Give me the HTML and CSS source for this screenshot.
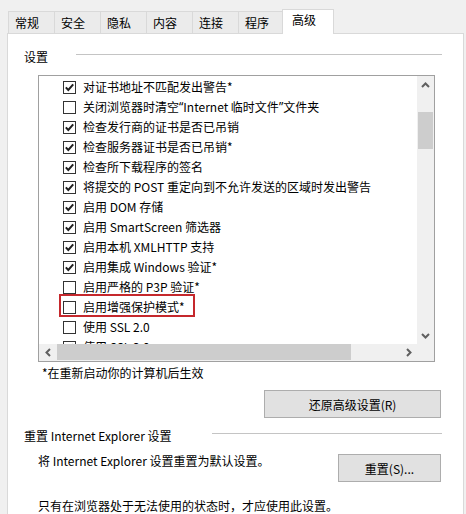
FILE: index.html
```html
<!DOCTYPE html>
<html lang="zh-CN">
  <head>
    <meta charset="UTF-8" />
    <title>Internet 选项 - 高级</title>
    <link rel="stylesheet" href="styles.css">
  </head>
  <body>
    <div class="tabs">
      <div class="tab">常规</div>
      <div class="tab">安全</div>
      <div class="tab">隐私</div>
      <div class="tab">内容</div>
      <div class="tab">连接</div>
      <div class="tab">程序</div>
      <div class="tab active">高级</div>
    </div>

    <div class="panel">
      <div class="group-title">
        <span>设置</span>
        <span class="rule rule-long"></span>
      </div>

      <div class="listbox">
        <div class="items">
          <div class="item"><span class="check on"></span>对证书地址不匹配发出警告*</div>
          <div class="item"><span class="check"></span>关闭浏览器时清空<span class="q">“</span>Internet 临时文件<span class="q">”</span>文件夹</div>
          <div class="item"><span class="check on"></span>检查发行商的证书是否已吊销</div>
          <div class="item"><span class="check on"></span>检查服务器证书是否已吊销*</div>
          <div class="item"><span class="check on"></span>检查所下载程序的签名</div>
          <div class="item"><span class="check on"></span>将提交的 POST 重定向到不允许发送的区域时发出警告</div>
          <div class="item"><span class="check on"></span>启用 DOM 存储</div>
          <div class="item"><span class="check on"></span>启用 SmartScreen 筛选器</div>
          <div class="item"><span class="check on"></span>启用本机 XMLHTTP 支持</div>
          <div class="item"><span class="check on"></span>启用集成 Windows 验证*</div>
          <div class="item"><span class="check"></span>启用严格的 P3P 验证*</div>
          <div class="item marked"><span class="check"></span>启用增强保护模式*</div>
          <div class="item"><span class="check"></span>使用 SSL 2.0</div>
          <div class="item"><span class="check on"></span>使用 SSL 3.0</div>
        </div>

        <div class="vscroll">
          <div class="arrow">
            <svg width="9" height="6" viewBox="0 0 9 6"><path d="M1 5 L4.5 1.5 L8 5" fill="none" stroke="#606060" stroke-width="2"/></svg>
          </div>
          <div class="vtrack"><div class="vthumb"></div></div>
          <div class="arrow">
            <svg width="9" height="6" viewBox="0 0 9 6"><path d="M1 1 L4.5 4.5 L8 1" fill="none" stroke="#606060" stroke-width="2"/></svg>
          </div>
        </div>

        <div class="hscroll">
          <div class="arrow">
            <svg width="6" height="9" viewBox="0 0 6 9"><path d="M5 1 L1.5 4.5 L5 8" fill="none" stroke="#606060" stroke-width="2"/></svg>
          </div>
          <div class="htrack"><div class="hthumb"></div></div>
          <div class="arrow">
            <svg width="6" height="9" viewBox="0 0 6 9"><path d="M1 1 L4.5 4.5 L1 8" fill="none" stroke="#606060" stroke-width="2"/></svg>
          </div>
        </div>

        <div class="corner"></div>
      </div>

      <p class="note">*在重新启动你的计算机后生效</p>

      <div class="btn-row">
        <button class="btn btn-wide">还原高级设置(R)</button>
      </div>

      <div class="group-title second">
        <span>重置 Internet Explorer 设置</span>
        <span class="rule rule-short"></span>
      </div>

      <div class="reset-row">
        <p class="desc">将 Internet Explorer 设置重置为默认设置。</p>
        <button class="btn btn-reset">重置(S)...</button>
      </div>

      <p class="desc last">只有在浏览器处于无法使用的状态时，才应使用此设置。</p>
    </div>
  </body>
</html>
```

FILE: styles.css
```css
/* Reset */
body,
p {
  margin: 0;
  padding: 0;
}

body {
  font-family: "Noto Sans CJK SC", "Noto Sans", sans-serif;
  font-size: 12px;
  line-height: 16px;
  color: #000;
  background-color: #f0f0f0;
  height: 514px;
  overflow: hidden;
}

/* Tab strip */
.tabs {
  display: flex;
  align-items: flex-end;
  padding: 9px 0 0 8px;
  height: 24px;
}

.tab {
  width: 47px;
  height: 22px;
  padding-left: 6px;
  box-sizing: border-box;
  line-height: 22px;
  background-color: #ebebeb;
  border: 1px solid #d9d9d9;
  border-bottom: none;
  margin-right: -1px;
}

.tab.active {
  position: relative;
  z-index: 1;
  width: 52px;
  height: 25px;
  margin: 0 0 -1px -2px;
  padding: 0 0 0 9px;
  line-height: 20px;
  background-color: #fff;
}

/* Main panel */
.panel {
  margin-left: 7px;
  width: 457px;
  height: 490px;
  box-sizing: border-box;
  background-color: #fff;
  border: 1px solid #d9d9d9;
  padding: 15px 21px 0 16px;
}

.group-title {
  display: flex;
  align-items: center;
  justify-content: space-between;
}

.rule {
  height: 1px;
  margin-top: -5px;
  background-color: #c4c4c4;
}

.rule-long {
  width: 366px;
}

.rule-short {
  width: 230px;
}

.group-title.second {
  margin-top: 10px;
}

/* Settings list */
.listbox {
  display: grid;
  grid-template-columns: 1fr 17px;
  grid-template-rows: 1fr 17px;
  margin: 10px 0 0 14px;
  width: 397px;
  height: 287px;
  box-sizing: border-box;
  border: 1px solid #a0a0a0;
}

.items {
  overflow: hidden;
  padding-top: 1px;
}

.item {
  display: flex;
  align-items: center;
  height: 20px;
  padding-left: 24px;
  white-space: nowrap;
}

/* narrow quotes like the system font */
.q {
  font-family: "Noto Sans", sans-serif;
}

.check {
  width: 13px;
  height: 13px;
  box-sizing: border-box;
  border: 1px solid #333;
  background-color: #fff;
  margin-right: 7px;
  flex: none;
}

.check.on {
  background: #fff url("data:image/svg+xml;utf8,<svg xmlns='http://www.w3.org/2000/svg' width='11' height='11' viewBox='0 0 11 11'><path d='M1.8 5.4 L4.3 8 L9.2 2.4' fill='none' stroke='%23202020' stroke-width='2'/></svg>") center no-repeat;
}

.item.marked {
  position: relative;
}

/* red highlight round the protected-mode row */
.item.marked::after {
  content: "";
  position: absolute;
  left: 20px;
  top: -3px;
  width: 136px;
  height: 23px;
  box-sizing: border-box;
  border: 2px solid #c5282c;
}

/* Scrollbars */
.vscroll,
.hscroll,
.corner {
  background-color: #f0f0f0;
}

.vscroll {
  display: flex;
  flex-direction: column;
}

.hscroll {
  display: flex;
}

.arrow {
  width: 17px;
  height: 17px;
  flex: none;
  display: flex;
  align-items: center;
  justify-content: center;
}

.vtrack {
  flex: 1;
  padding-top: 19px;
}

.vthumb {
  width: 15px;
  height: 37px;
  margin-left: 1px;
  background-color: #cdcdcd;
}

.htrack {
  flex: 1;
}

.hthumb {
  width: 294px;
  height: 16px;
  margin-left: 1px;
  background-color: #cdcdcd;
}

/* Below the list */
.note {
  margin: 3px 0 0 18px;
}

.btn-row {
  display: flex;
  justify-content: flex-end;
  margin-top: 9px;
}

.btn {
  font-family: inherit;
  font-size: 12px;
  color: #000;
  background-color: #e1e1e1;
  border: 1px solid #adadad;
  padding: 0;
  height: 28px;
}

.btn-wide {
  width: 177px;
  margin-right: 1px;
}

.reset-row {
  display: flex;
  justify-content: space-between;
  align-items: flex-start;
  margin-top: 9px;
}

.desc {
  margin-left: 14px;
}

.btn-reset {
  width: 103px;
  margin: 1px 1px 0 0;
}

.desc.last {
  margin-top: 16px;
}
```
